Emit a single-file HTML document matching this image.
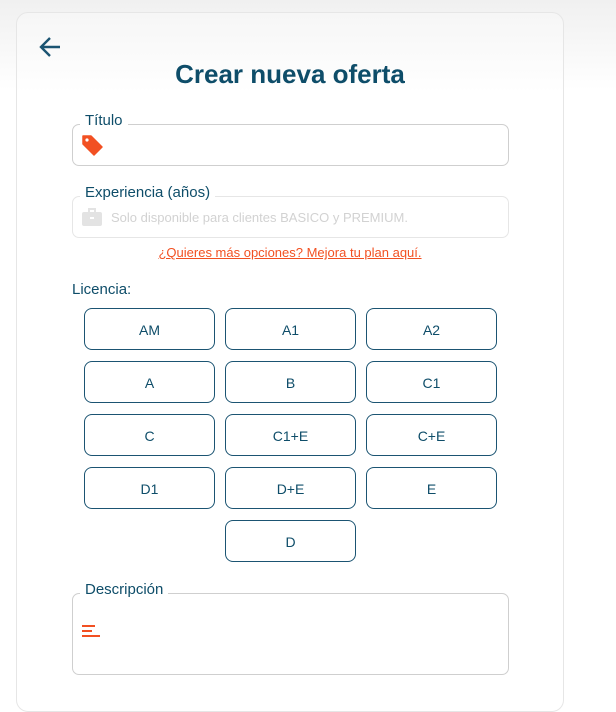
<!DOCTYPE html>
<html style="background:#fff"><head><meta charset="utf-8"><style>
*{box-sizing:border-box;margin:0;padding:0}
body{width:616px;height:688px;overflow:hidden;font-family:"Liberation Sans",sans-serif;background:linear-gradient(#f0f0f0 0,#fff 90px);position:relative;color:#0e4d69}
.card{position:absolute;left:16px;top:12px;width:548px;height:700px;border:1px solid #e6e6e6;border-radius:12px;background:linear-gradient(#f6f6f6 0,#fff 80px)}
.abs{position:absolute}
h1{position:absolute;left:0;width:580px;top:59px;text-align:center;font-size:26px;font-weight:bold;color:#0e4d69}
.box{position:absolute;left:72px;width:437px;border:1px solid #cfcfcf;border-radius:7px;background:#fff}
.lbl{position:absolute;left:80px;background:#fff;padding:0 5px;font-size:15px;color:#0e4d69}
.btn{position:absolute;width:131px;height:42px;border:1px solid #1b5472;border-radius:8px;text-align:center;line-height:42px;font-size:14px;color:#0e4d69;background:#fff}
</style></head><body>
<div class="card"></div>
<svg class="abs" style="left:38px;top:36px" width="24" height="22" viewBox="0 0 24 22"><path d="M22 11H4M12 2L3 11l9 9" fill="none" stroke="#1b5472" stroke-width="2.4"/></svg>
<h1>Crear nueva oferta</h1>
<div class="box" style="top:124px;height:42px"></div>
<div class="lbl" style="top:112px;background:linear-gradient(transparent 50%,#fff 50%)">Título</div>
<svg class="abs" style="left:82px;top:135px" width="22" height="22" viewBox="0 0 22 22"><path d="M1 4V1h8l11 11-8 8L1 9z" fill="#f25022" stroke="#f25022" stroke-linejoin="round" stroke-width="1.5"/><circle cx="5" cy="5" r="1.6" fill="#fff"/></svg>
<div class="box" style="top:196px;height:42px;border-color:#e6e6e6"></div>
<div class="lbl" style="top:184px;background:linear-gradient(transparent 50%,#fff 50%)">Experiencia (años)</div>
<svg class="abs" style="left:82px;top:208px" width="20" height="18" viewBox="0 0 20 18"><rect x="7" y="1" width="6" height="4" fill="none" stroke="#e3e3e3" stroke-width="2"/><rect x="0" y="4" width="20" height="14" rx="2" fill="#e3e3e3"/><rect x="8" y="9" width="4" height="2" fill="#fff"/></svg>
<div class="abs" style="left:111px;top:210px;font-size:13px;color:#d2d2d2">Solo disponible para clientes BASICO y PREMIUM.</div>
<div class="abs" style="left:0;width:580px;top:245px;text-align:center;font-size:13px;color:#f25022;text-decoration:underline">¿Quieres más opciones? Mejora tu plan aquí.</div>
<div class="abs" style="left:72px;top:281px;font-size:15px">Licencia:</div>
<div class="btn" style="left:84px;top:308px">AM</div>
<div class="btn" style="left:225px;top:308px">A1</div>
<div class="btn" style="left:366px;top:308px">A2</div>
<div class="btn" style="left:84px;top:361px">A</div>
<div class="btn" style="left:225px;top:361px">B</div>
<div class="btn" style="left:366px;top:361px">C1</div>
<div class="btn" style="left:84px;top:414px">C</div>
<div class="btn" style="left:225px;top:414px">C1+E</div>
<div class="btn" style="left:366px;top:414px">C+E</div>
<div class="btn" style="left:84px;top:467px">D1</div>
<div class="btn" style="left:225px;top:467px">D+E</div>
<div class="btn" style="left:366px;top:467px">E</div>
<div class="btn" style="left:225px;top:520px">D</div>
<div class="box" style="top:593px;height:82px"></div>
<div class="lbl" style="top:581px;background:linear-gradient(transparent 50%,#fff 50%)">Descripción</div>
<svg class="abs" style="left:82px;top:625px" width="20" height="18" viewBox="0 0 20 18"><path d="M0 1h13M0 6h10M0 11h18" stroke="#f25022" stroke-width="2"/></svg>
</body></html>
